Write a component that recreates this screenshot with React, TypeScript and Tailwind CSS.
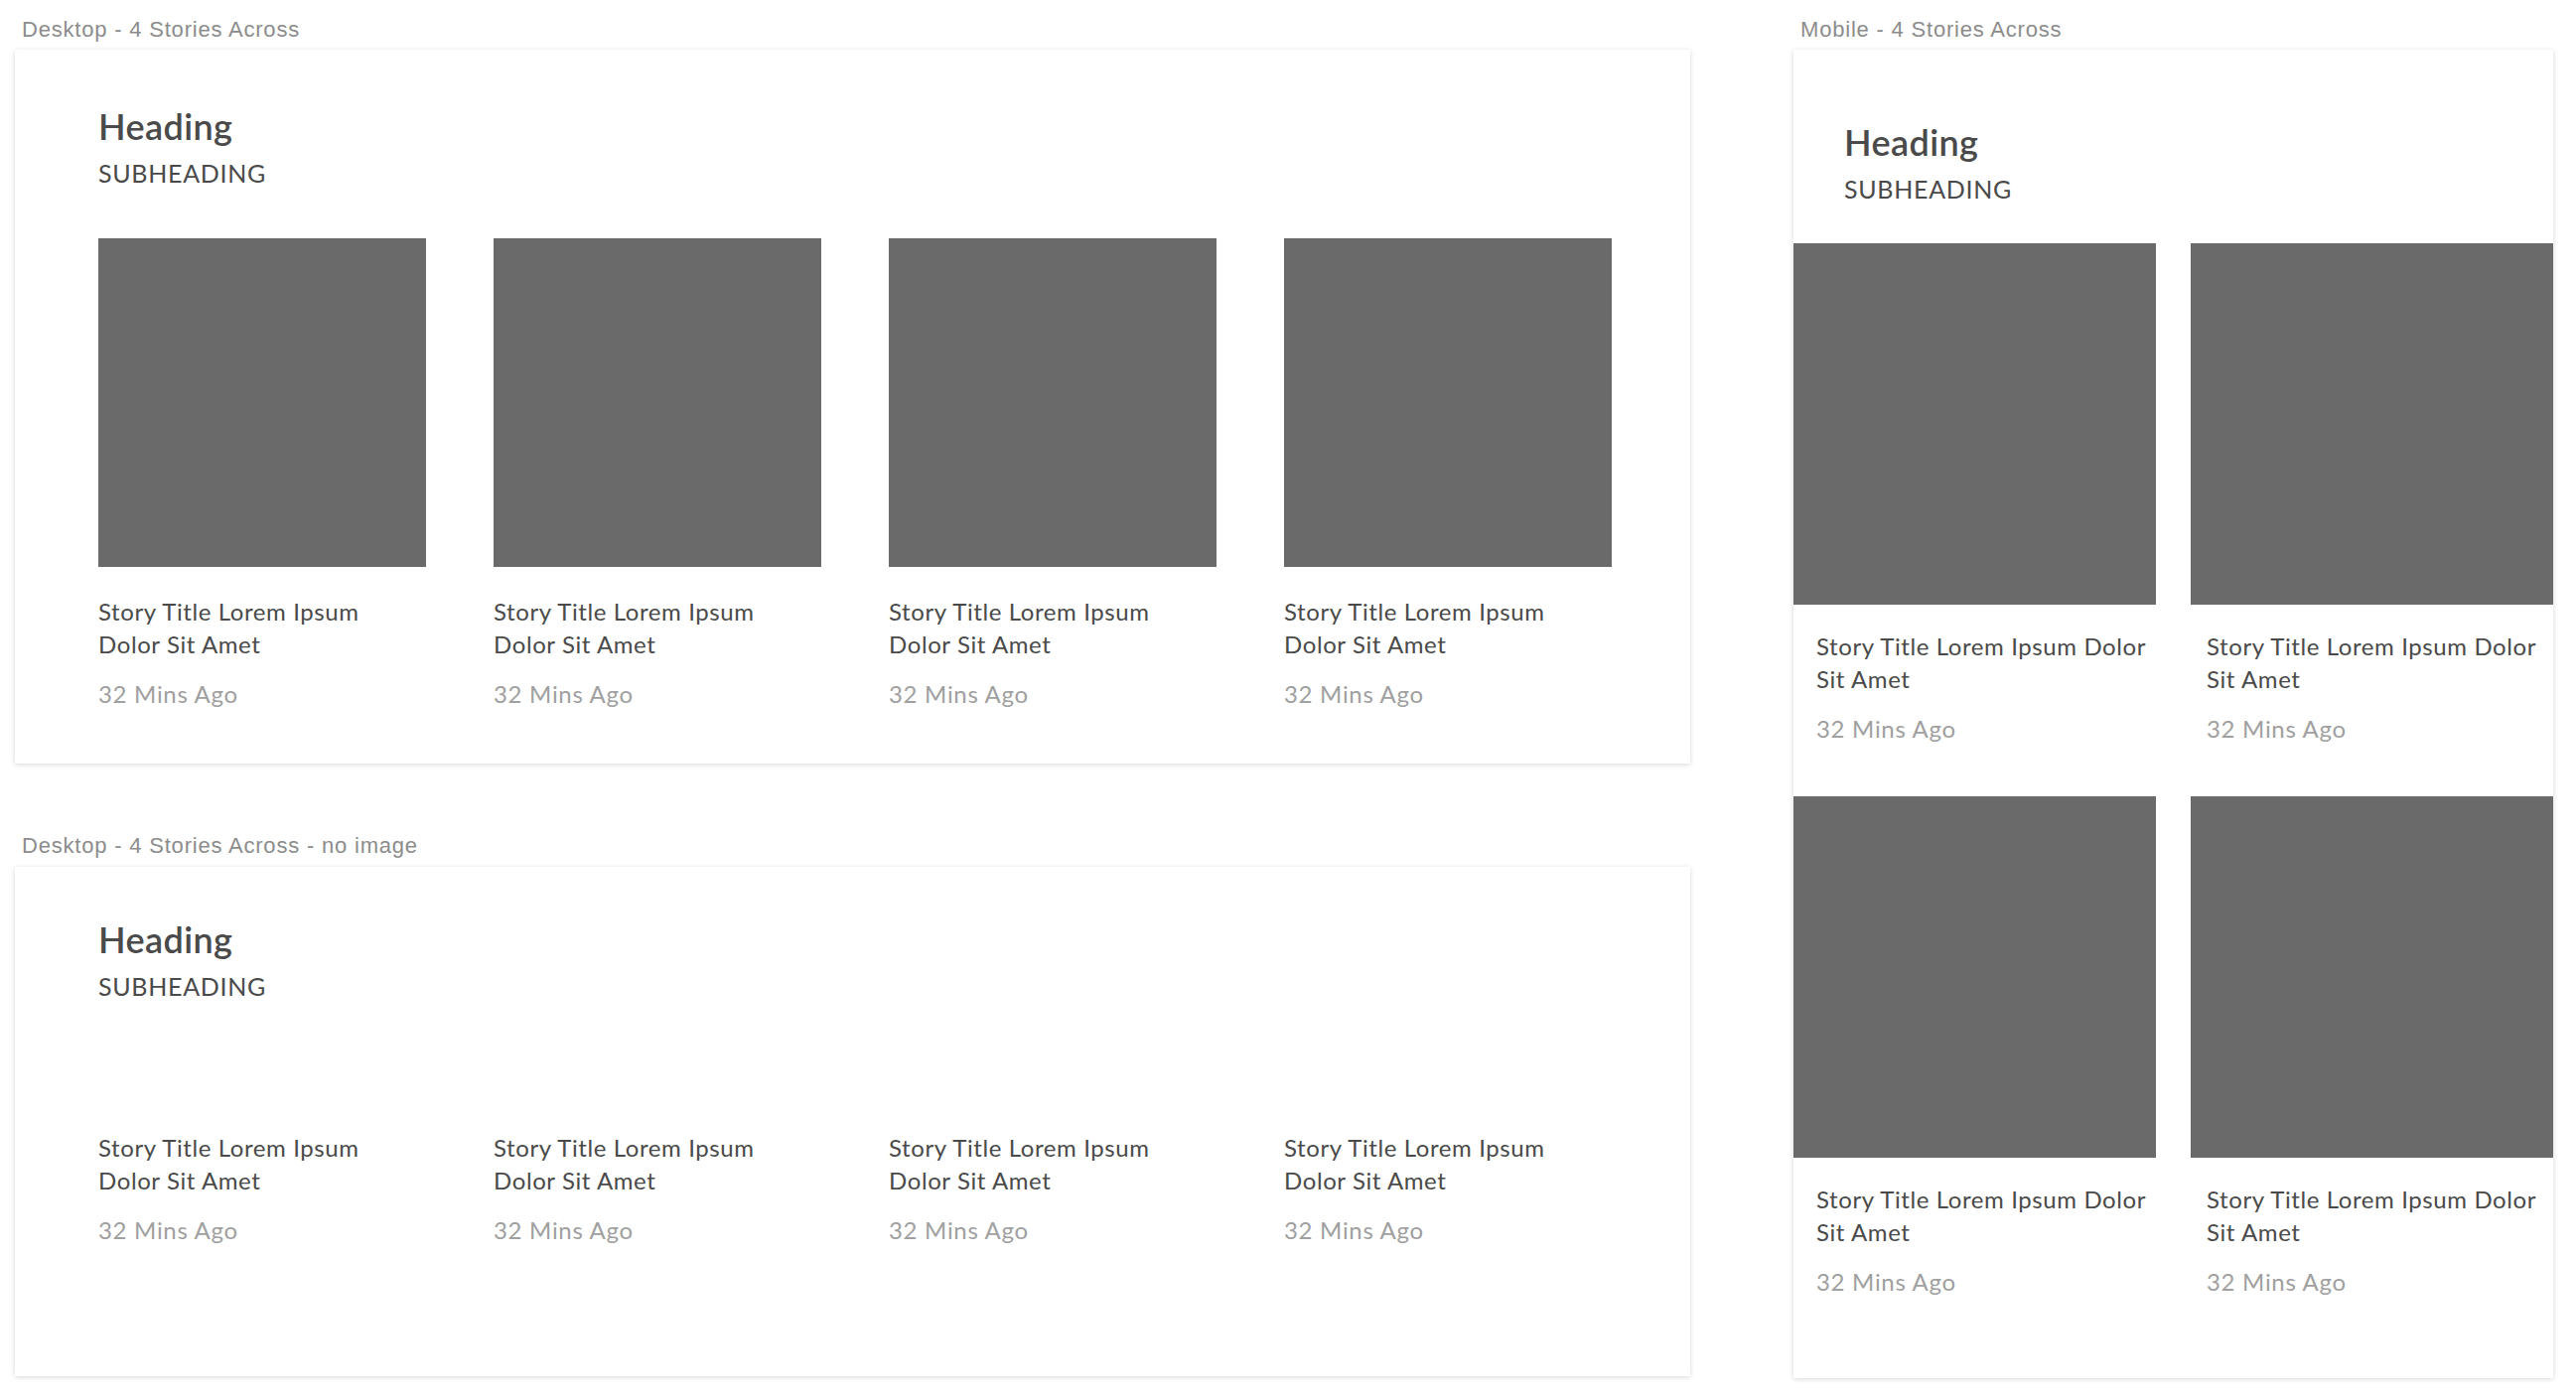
import React from 'react';

// wireframe artboards: desktop row (with / without image) and mobile 2x2 grid
const stories = [1, 2, 3, 4].map(i => ({
  id: i,
  title: 'Story Title Lorem Ipsum Dolor Sit Amet',
  time: '32 Mins Ago',
}));

const sans = "font-['Lato','Noto_Sans',sans-serif]";

function ArtboardLabel({ children }: { children: React.ReactNode }) {
  return (
    <p className="pl-[7px] font-['Liberation_Sans',Arial,sans-serif] text-[22px] leading-[26px] tracking-[0.8px] text-[#8c8c8c]">
      {children}
    </p>
  );
}

function CardHeader() {
  return (
    <div className={sans}>
      <h2 className="text-[36px] leading-[40px] font-semibold tracking-[0.4px] text-[#4a4a4a]">Heading</h2>
      <p className="mt-[12px] text-[25px] leading-[30px] tracking-[0.7px] text-[#4a4a4a]">SUBHEADING</p>
    </div>
  );
}

function StoryText({ title, time, className = '' }: { title: string; time: string; className?: string }) {
  return (
    <div className={`${sans} ${className}`}>
      <p className="text-[24px] leading-[33px] tracking-[0.6px] text-[#4a4a4a]">{title}</p>
      <p className="mt-[17px] text-[24px] leading-[33px] tracking-[0.7px] text-[#a0a0a0]">{time}</p>
    </div>
  );
}

function DesktopCard({ withImage }: { withImage: boolean }) {
  return (
    <div
      className={`w-[1687px] bg-white shadow-[0_1px_5px_rgba(0,0,0,0.16)] pl-[84px] ${
        withImage ? 'pt-[57px] pb-[54px]' : 'pt-[53px] pb-[131px]'
      }`}
    >
      <CardHeader />
      <div className={`grid grid-cols-[repeat(4,330px)] gap-x-[68px] ${withImage ? 'mt-[51px]' : 'mt-[131px]'}`}>
        {stories.map(s => (
          <div key={s.id}>
            {withImage && <div className="w-[330px] h-[331px] bg-[#6a6a6a]" />}
            <StoryText
              title={s.title}
              time={s.time}
              className={`max-w-[315px] ${withImage ? 'mt-[28px]' : ''}`}
            />
          </div>
        ))}
      </div>
    </div>
  );
}

function MobileCard() {
  return (
    <div className="w-[765px] h-[1338px] bg-white shadow-[0_1px_5px_rgba(0,0,0,0.16)] pt-[73px]">
      <div className="pl-[51px]">
        <CardHeader />
      </div>
      <div className="mt-[40px] grid grid-cols-[365px_365px] gap-x-[35px] gap-y-[52px]">
        {stories.map((s, i) => (
          <div key={s.id}>
            <div className="w-[365px] h-[364px] bg-[#6a6a6a]" />
            <StoryText
              title={s.title}
              time={s.time}
              className={`mt-[25px] ${i % 2 === 0 ? 'pl-[23px]' : 'pl-[16px]'}`}
            />
          </div>
        ))}
      </div>
    </div>
  );
}

export default function App() {
  return (
    <div className="min-h-screen w-[2594px] bg-white pt-[17px]">
      <div className="flex items-start">
        <div className="ml-[15px] flex flex-col">
          <ArtboardLabel>Desktop - 4 Stories Across</ArtboardLabel>
          <div className="mt-[7px]">
            <DesktopCard withImage />
          </div>
          <div className="mt-[70px]">
            <ArtboardLabel>Desktop - 4 Stories Across - no image</ArtboardLabel>
          </div>
          <div className="mt-[8px]">
            <DesktopCard withImage={false} />
          </div>
        </div>
        <div className="ml-[104px] flex flex-col">
          <ArtboardLabel>Mobile - 4 Stories Across</ArtboardLabel>
          <div className="mt-[7px]">
            <MobileCard />
          </div>
        </div>
      </div>
    </div>
  );
}
